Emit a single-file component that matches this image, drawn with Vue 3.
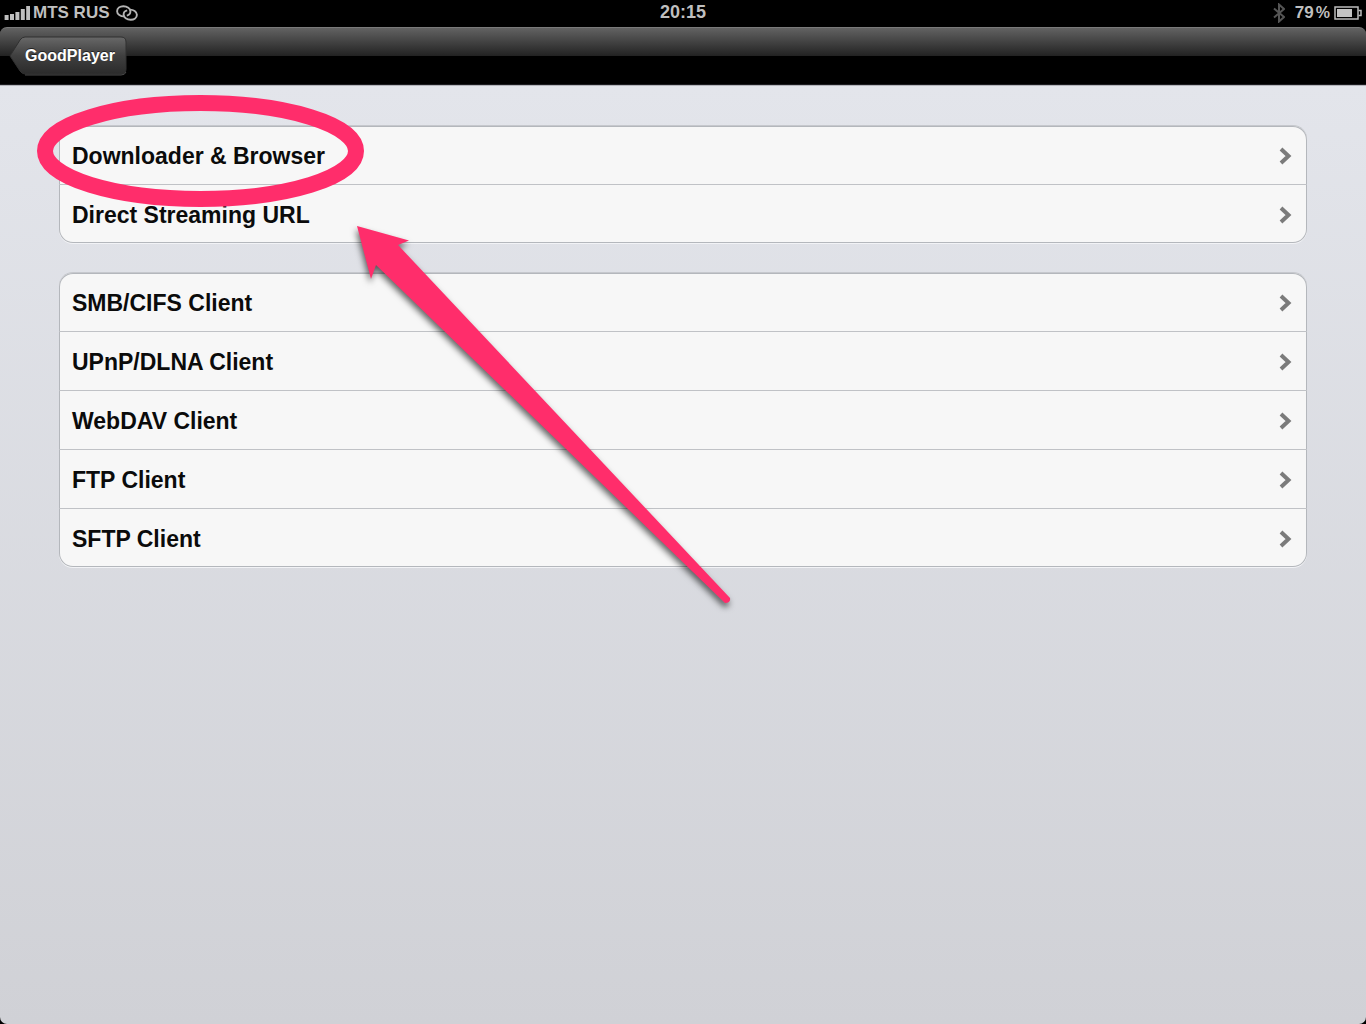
<template>
  <div class="screen">
    <header class="status-bar">
      <div class="status-left">
        <svg class="signal" width="26" height="14" viewBox="0 0 26 14">
          <rect
            v-for="(h, index) in signalBars"
            :key="index"
            :x="index * 5.4 + 0.6"
            :y="14 - h"
            width="4"
            :height="h"
            fill="#bfbfbf"
          />
        </svg>
        <span class="carrier">{{ carrier }}</span>
        <svg class="link-icon" width="22" height="16" viewBox="0 0 22 16">
          <g fill="none" stroke="#b4b4b4" stroke-width="1.900">
            <path
              d="M8.500 11.400C4.500 11.600 1.100 9.400 1.100 6.200C1.100 3.200 4 1.300 7.300 1.300C11.300 1.300 14.400 3.600 14.400 6.500C14.400 8.600 13 10.100 10.800 10.600"
            />
            <path
              d="M13.500 4.600C17.500 4.400 20.900 6.600 20.900 9.800C20.900 12.800 18 14.700 14.700 14.700C10.700 14.700 7.600 12.400 7.600 9.500C7.600 7.400 9 5.900 11.200 5.400"
            />
          </g>
        </svg>
      </div>
      <time class="clock">{{ time }}</time>
      <div class="status-right">
        <svg class="bluetooth" width="12" height="20" viewBox="0 0 12 20">
          <path
            d="M1 5.500L11 14L6 18.500V1.500L11 6L1 14.500"
            fill="none"
            stroke="#555"
            stroke-width="2"
          />
        </svg>
        <span class="percent">{{ battery }}<span class="sign">%</span></span>
        <svg class="battery" width="28" height="14" viewBox="0 0 28 14">
          <rect x="1" y="1" width="23" height="12" fill="none" stroke="#bdbdbd" stroke-width="1.500" />
          <path d="M24.500 4.500H27V9.500H24.500" fill="none" stroke="#bdbdbd" stroke-width="1.500" />
          <rect x="3" y="3" width="15" height="8" fill="#c4c4c4" />
        </svg>
      </div>
    </header>

    <nav class="nav-bar">
      <button type="button" class="back-button">
        <svg class="back-shape" width="118" height="40" viewBox="0 0 118 40">
          <defs>
            <linearGradient id="back-fill" x1="0" y1="0" x2="0" y2="1">
              <stop offset="0" stop-color="#686868" />
              <stop offset="0.5" stop-color="#404040" />
              <stop offset="1" stop-color="#2b2b2b" />
            </linearGradient>
          </defs>
          <path
            d="M16 1H112Q117 1 117 6V33Q117 38 112 38H16Q13 38 11 35L1 20L11 4Q13 1 16 1Z"
            fill="url(#back-fill)"
            stroke="#303030"
          />
          <path d="M16 39H112Q116 39 117 36" fill="none" stroke="#4a4a4a" />
        </svg>
        <span class="back-label">GoodPlayer</span>
      </button>
    </nav>

    <main class="content">
      <ul v-for="(group, index) in groups" :key="index" class="group">
        <li v-for="item in group" :key="item" class="row">
          <a href="#" class="row-link">
            <span>{{ item }}</span>
            <svg class="chevron" width="13" height="18" viewBox="0 0 13 18">
              <path d="M2 2L9.500 9L2 16" fill="none" stroke="#7b7b7b" stroke-width="4" />
            </svg>
          </a>
        </li>
      </ul>
    </main>

    <svg class="annotation" width="760" height="640" viewBox="0 0 760 640">
      <ellipse
        cx="200.500"
        cy="151"
        rx="155.500"
        ry="48"
        fill="none"
        stroke="#ff2d6b"
        stroke-width="16"
      />
      <path
        class="arrow"
        d="M357 226L409 240.500L398 245L730 598Q731 603 725 603L376 265L371 279Z"
        fill="#ff2d6b"
      />
    </svg>
  </div>
</template>

<script setup>
const carrier = "MTS RUS";
const time = "20:15";
const battery = 79;
const signalBars = [5, 6, 8, 11, 14];

const groups = [
  ["Downloader & Browser", "Direct Streaming URL"],
  [
    "SMB/CIFS Client",
    "UPnP/DLNA Client",
    "WebDAV Client",
    "FTP Client",
    "SFTP Client",
  ],
];
</script>

<style>
body {
  margin: 0;
  background: #000;
}
</style>

<style scoped>
.screen {
  position: relative;
  display: flex;
  flex-direction: column;
  min-height: 100vh;
  background: #000;
  font-family: "Liberation Sans", Helvetica, Arial, sans-serif;
  font-weight: bold;
}

.status-bar {
  display: grid;
  grid-template-columns: 1fr auto 1fr;
  align-items: center;
  height: 27px;
  padding: 0 4px 2px;
  box-sizing: border-box;
  color: #bfbfbf;
  font-size: 17px;
  line-height: 25px;
}

.status-left,
.status-right {
  display: flex;
  align-items: center;
}

.status-left {
  gap: 3px;
}

.link-icon {
  margin-left: 3px;
}

.clock {
  font-size: 18px;
}

.status-right {
  justify-content: flex-end;
  gap: 4px;
}

.bluetooth {
  margin-right: 6px;
}

.sign {
  margin-left: 2px;
  font-size: 16px;
}

.nav-bar {
  height: 58px;
  padding: 9px;
  box-sizing: border-box;
  border-top: 1px solid #7a7a7a;
  border-bottom: 1px solid #1c1c20;
  border-radius: 7px 7px 0 0;
  background: linear-gradient(#626262, #222 28px, #000 28px);
}

.back-button {
  position: relative;
  display: block;
  width: 118px;
  height: 40px;
  margin: 0;
  padding: 0;
  border: none;
  background: none;
  color: #fff;
  font: inherit;
  font-size: 16px;
  line-height: 38px;
  text-shadow: 0 -1px 0 #222;
}

.back-shape {
  position: absolute;
  top: -1px;
  left: 0;
}

.back-label {
  position: relative;
  display: block;
  padding-left: 4px;
  line-height: 36px;
  margin-bottom: 2px;
}

.content {
  display: flex;
  flex: 1;
  flex-direction: column;
  gap: 30px;
  padding: 40px 59px;
  border-top: 1px solid #b4b5bb;
  border-radius: 0 0 7px 7px;
  background: linear-gradient(#e3e5eb, #d0d1d6);
}

.group {
  margin: 0;
  padding: 0;
  border-radius: 14px;
  background: #f7f7f7;
  box-shadow:
    0 -1px 0 #c6c8cd,
    inset 0 0 0 1px #b4b7bc,
    0 1px 0 #f2f3f6;
  list-style: none;
}

.row {
  height: 59px;
  box-sizing: border-box;
  border-bottom: 1px solid #c0c2c6;
}

.row:last-child {
  height: 58px;
  border-bottom: none;
}

.row-link {
  display: flex;
  align-items: center;
  justify-content: space-between;
  height: 100%;
  padding: 1px 15px 0 13px;
  box-sizing: border-box;
  color: #0b0b0b;
  font-size: 23px;
  line-height: 28px;
  text-decoration: none;
}

.annotation {
  position: absolute;
  top: 0;
  left: 0;
  pointer-events: none;
}

.arrow {
  filter: drop-shadow(-1px 4px 3px rgba(0, 0, 0, 0.6));
}
</style>
